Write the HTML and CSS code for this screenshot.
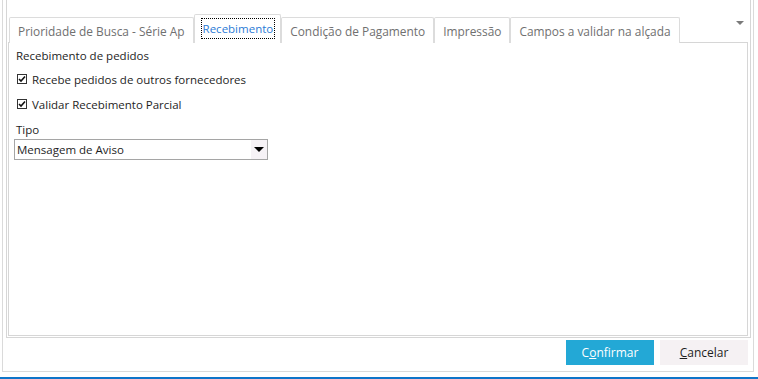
FILE: index.html
```html
<!DOCTYPE html>
<html lang="pt-BR">

<head>
    <meta charset="UTF-8" />
    <title>Parâmetros de Compras</title>
    <link rel="stylesheet" href="styles.css">
</head>

<body>

    <div class="window">
        <div class="tabbox">
            <div class="tab-strip">
                <div class="tab">Prioridade de Busca - Série Ap</div>
                <div class="tab active"><span class="focus">Recebimento</span></div>
                <div class="tab">Condição de Pagamento</div>
                <div class="tab">Impressão</div>
                <div class="tab">Campos a validar na alçada</div>
                <div class="tab-menu"></div>
            </div>

            <div class="tab-panel">
                <div class="group-title">Recebimento de pedidos</div>

                <label class="check">
                    <span class="box"><svg width="8" height="8" viewBox="0 0 8 8"><path d="M1 4 L3 6 L7 1.5" fill="none" stroke="#111" stroke-width="1.6"/></svg></span>
                    Recebe pedidos de outros fornecedores
                </label>

                <label class="check">
                    <span class="box"><svg width="8" height="8" viewBox="0 0 8 8"><path d="M1 4 L3 6 L7 1.5" fill="none" stroke="#111" stroke-width="1.6"/></svg></span>
                    Validar Recebimento Parcial
                </label>

                <div class="field-label">Tipo</div>
                <div class="combo">
                    <span class="combo-text">Mensagem de Aviso</span>
                    <span class="combo-arrow"></span>
                </div>
            </div>
        </div>

        <div class="footer">
            <button type="button" class="btn btn-primary">C<u>o</u>nfirmar</button>
            <button type="button" class="btn"><u>C</u>ancelar</button>
        </div>
    </div>

    <div class="taskbar-line"></div>

</body>

</html>
```

FILE: styles.css
```css
* {
    box-sizing: border-box;
}

body {
    margin: 0;
    background-color: #fff;
    font-family: "Open Sans", "Noto Sans", sans-serif;
    font-size: 11.5px;
    color: #1e1e1e;
}

.window {
    margin-left: 2px;
    width: 752px;
    height: 372px;
    border: 1px solid #dadada;
    border-top: none;
    padding-left: 3px;
}

.tabbox {
    width: 745px;
    height: 338px;
    border: 1px solid #d6d6d6;
    border-top: none;
    padding-left: 1px;
}

.tab-strip {
    display: flex;
    align-items: flex-end;
    height: 42px;
    padding-left: 1px;
    position: relative;
}

.tab {
    height: 26px;
    padding: 0 8px;
    margin-bottom: -1px;
    border: 1px solid #dcdcdc;
    border-bottom: none;
    border-radius: 2px 2px 0 0;
    background-color: #fff;
    color: #707070;
    font-size: 11.9px;
    line-height: 26px;
    white-space: nowrap;
}

.tab.active {
    height: 29px;
    padding: 3px 5px 0 6px;
    position: relative;
    z-index: 1;
    color: #2b7bd6;
    font-size: 11.5px;
}

.tab.active .focus {
    display: block;
    border: 1px dotted #000;
    line-height: 19px;
    padding: 0 1px;
}

.tab-menu {
    position: absolute;
    right: 6px;
    top: 21px;
    width: 0;
    height: 0;
    border-left: 4px solid transparent;
    border-right: 4px solid transparent;
    border-top: 4px solid #7a7a7a;
}

.tab-panel {
    width: 740px;
    height: 294px;
    border: 1px solid #d6d6d6;
    padding: 4px 7px;
}

.group-title {
    line-height: 18px;
}

.check {
    display: flex;
    align-items: center;
    height: 18px;
    margin-top: 5px;
    padding-left: 1px;
}

.check + .check {
    margin-top: 7px;
}

.check .box {
    display: flex;
    align-items: center;
    justify-content: center;
    width: 10px;
    height: 10px;
    border: 1px solid #333;
    margin-right: 5px;
}

.field-label {
    margin-top: 8px;
    line-height: 18px;
}

.combo {
    display: flex;
    align-items: center;
    justify-content: space-between;
    width: 254px;
    height: 21px;
    margin-left: -2px;
    border: 1px solid #a5a5a5;
    padding-left: 2px;
}

.combo-arrow {
    width: 16px;
    height: 19px;
    background-color: #f6f2f6;
    position: relative;
}

.combo-arrow::after {
    content: "";
    position: absolute;
    left: 3px;
    top: 7px;
    border-left: 5px solid transparent;
    border-right: 5px solid transparent;
    border-top: 5px solid #000;
}

.footer {
    display: flex;
    justify-content: flex-end;
    gap: 6px;
    padding: 2px 5px 0 0;
}

.btn {
    width: 88px;
    height: 25px;
    border: none;
    background-color: #f5f1f3;
    color: #1e1e1e;
    font-family: inherit;
    font-size: 12px;
    padding: 0;
}

.btn-primary {
    background-color: #23a8d6;
    color: #fff;
}

.taskbar-line {
    height: 2px;
    margin-top: 5px;
    background-color: #0f75c9;
}
```
